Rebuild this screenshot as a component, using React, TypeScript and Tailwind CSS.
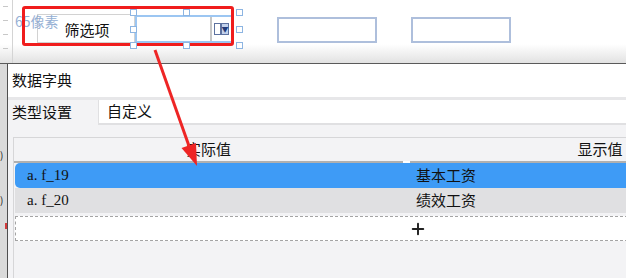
import { Plus } from "lucide-react";

const cjk = {
  fontFamily: '"Noto Sans CJK SC", "Noto Sans", sans-serif',
};

type Row = {
  code: string;
  label: string;
  selected?: boolean;
};

const rows: Row[] = [
  { code: "a. f_19", label: "基本工资", selected: true },
  { code: "a. f_20", label: "绩效工资" },
];

// selection handles around the picked widget
const handles = [
  "left-[130px] top-[9px]",
  "left-[183px] top-[9px]",
  "left-[236px] top-[9px]",
  "left-[130px] top-[26px]",
  "left-[236px] top-[26px]",
  "left-[130px] top-[42px]",
  "left-[183px] top-[42px]",
  "left-[236px] top-[42px]",
];

function Canvas() {
  return (
    <div className="flex h-[64px] shrink-0 border-b border-[#5a5a5a] bg-linear-to-b from-white from-70% to-[#e2e2e2]">
      <div className="flex w-[13px] shrink-0 flex-col gap-[13px] border-r border-[#d4d4d4] pt-[6px] pl-[3px]">
        <div className="h-px w-[5px] bg-[#c8c8c8]" />
        <div className="h-px w-[5px] bg-[#c8c8c8]" />
        <div className="h-px w-[5px] bg-[#c8c8c8]" />
        <div className="h-px w-[5px] bg-[#c8c8c8]" />
      </div>

      <div className="flex items-start pt-[14px] pl-[24px]">
        <div className="flex h-[29px] w-[98px] shrink-0 items-center justify-center border border-[#d2d2d2] pt-[3px] pl-[2px] text-[15px] text-[#111]">
          筛选项
        </div>

        <div className="mt-px flex h-[28px] w-[98px] shrink-0 items-center justify-end border-2 border-[#9cc6f2] bg-white pr-[2px]">
          <div className="h-full w-[2px] bg-[#c6c6c6]" />
          <div className="ml-[2px] h-[12px] w-[7px] border border-[#5d72a0] bg-white" />
          <div className="flex h-[12px] w-[8px] items-center justify-center border border-[#5d72a0] bg-[#c3d2ec] text-[7px] leading-none text-[#223a78]">
            ▼
          </div>
        </div>

        <div className="mt-[3px] ml-[44px] h-[26px] w-[100px] shrink-0 border-2 border-[#aebfdc] bg-white" />

        <div className="mt-[3px] ml-[34px] h-[26px] w-[100px] shrink-0 border-2 border-[#aebfdc] bg-white" />
      </div>
    </div>
  );
}

function Dialog() {
  return (
    <div className="flex min-h-0 flex-1">
      <div className="flex w-[7px] shrink-0 flex-col items-start bg-[#dadada] pt-[86px] text-[10px] leading-none text-[#222]">
        <span>)</span>
        <span className="mt-[35px]">)</span>
        <span className="mt-[18px] h-[6px] w-[2px] self-end bg-[#d23a3a]" />
      </div>

      <div className="flex min-w-0 flex-1 flex-col border-l border-[#4f4f4f]">
        <div className="flex h-[33px] items-center bg-white pl-[4px] text-[15px] text-[#111]">
          数据字典
        </div>

        <div className="h-[3px] bg-[#e7e7e9]" />

        <div className="flex flex-1 flex-col bg-[#f3f3f5]">
          <div className="flex h-[25px] items-stretch">
            <div className="flex w-[90px] shrink-0 items-center pl-[4px] text-[15px] text-[#111]">
              类型设置
            </div>
            <div className="flex flex-1 items-center border-b-2 border-l border-[#e0e0e2] bg-white pl-[8px] text-[15px] text-[#111]">
              自定义
            </div>
          </div>

          <div className="mt-[12px] ml-[5px] flex w-[790px] flex-1 flex-col border-t border-l border-[#d6d6d8]">
            <div className="flex h-[25px] text-[15px] text-[#111]">
              <div className="flex w-[389px] items-center justify-center border-b-2 border-[#b0b0b0]">
                实际值
              </div>
              <div className="w-[7px] border-b-2 border-white" />
              <div className="flex w-[380px] items-center justify-center border-b-2 border-[#b0b0b0]">
                显示值
              </div>
            </div>

            {rows.map((row) => (
              <div
                key={row.code}
                className={`ml-px flex h-[25px] items-center text-[#111] ${
                  row.selected
                    ? "rounded-l-[5px] bg-[#3e9bf6]"
                    : "bg-[#e0e0e2]"
                }`}
              >
                <div
                  className="w-[388px] pl-[12px] text-[15px]"
                  style={{
                    fontFamily:
                      '"Liberation Serif", serif',
                  }}
                >
                  {row.code}
                </div>
                <div className="w-[7px]" />
                <div className="pl-[6px] text-[15px]">
                  {row.label}
                </div>
              </div>
            ))}

            <div className="mt-[3px] ml-px flex h-[25px] items-center border border-dashed border-[#a4a4a4] bg-white">
              <div className="w-[393px]" />
              <Plus
                size={18}
                strokeWidth={2.6}
                color="#222"
              />
            </div>
          </div>
        </div>
      </div>
    </div>
  );
}

export default function App() {
  return (
    <div
      className="relative flex h-[278px] w-[626px] flex-col overflow-hidden bg-white"
      style={cjk}
    >
      <Canvas />
      <Dialog />

      {/* annotation overlays */}
      <div className="absolute top-[14px] left-[15px] text-[14px] leading-none text-[#8aa7d0] opacity-90">
        65像素
      </div>

      <div className="absolute top-[6px] left-[22px] h-[40px] w-[212px] rounded-[3px] border-[3px] border-[#f01d1d]" />

      {handles.map((pos) => (
        <div
          key={pos}
          className={`absolute h-[7px] w-[7px] border border-[#8db5e2] bg-white ${pos}`}
        />
      ))}

      <svg
        className="pointer-events-none absolute inset-0"
        width="626"
        height="278"
      >
        <line
          x1="155"
          y1="50"
          x2="189"
          y2="146"
          stroke="#ee2525"
          strokeWidth="3"
        />
        <polygon
          points="197,166 181.5,148 196,143"
          fill="#ee2525"
        />
      </svg>
    </div>
  );
}
